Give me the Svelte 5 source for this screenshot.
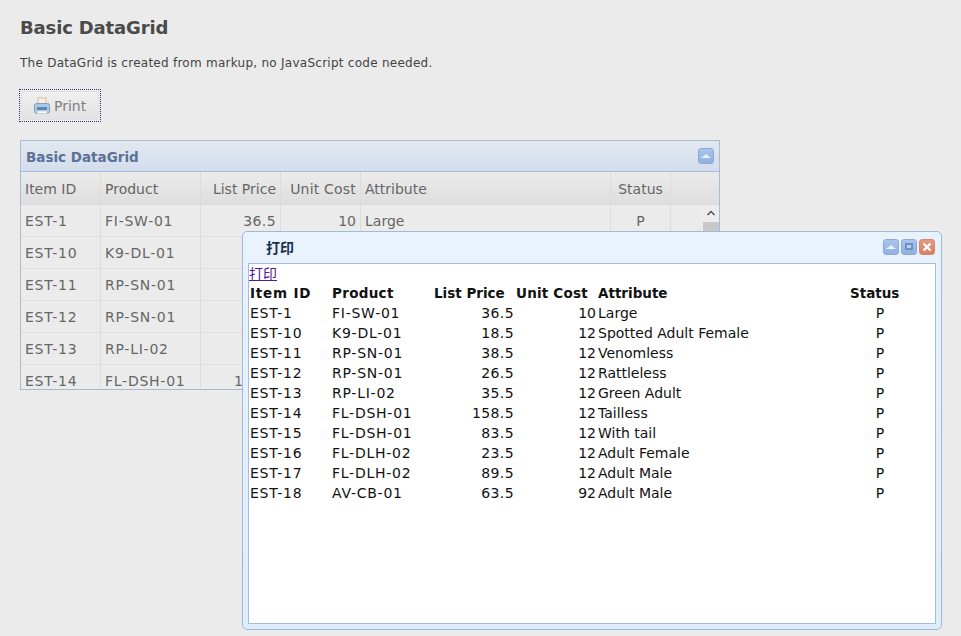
<script>
  const rows = [
    ['EST-1','FI-SW-01','36.5','10','Large','P'],
    ['EST-10','K9-DL-01','18.5','12','Spotted Adult Female','P'],
    ['EST-11','RP-SN-01','38.5','12','Venomless','P'],
    ['EST-12','RP-SN-01','26.5','12','Rattleless','P'],
    ['EST-13','RP-LI-02','35.5','12','Green Adult','P'],
    ['EST-14','FL-DSH-01','158.5','12','Tailless','P'],
    ['EST-15','FL-DSH-01','83.5','12','With tail','P'],
    ['EST-16','FL-DLH-02','23.5','12','Adult Female','P'],
    ['EST-17','FL-DLH-02','89.5','12','Adult Male','P'],
    ['EST-18','AV-CB-01','63.5','92','Adult Male','P']
  ];
  const visible = rows.slice(0, 6);
  const heads = ['Item ID','Product','List Price','Unit Cost','Attribute','Status'];
</script>

<div class="page">
  <h2>Basic DataGrid</h2>
  <p>The DataGrid is created from markup, no JavaScript code needed.</p>
  <div class="focus">
    <button class="print">
      <svg width="18" height="18" viewBox="0 0 18 18">
        <rect x="5" y="1" width="8" height="6" fill="#fbeee0" stroke="#d9b9a0"/>
        <path d="M1.500 8.500q0-2 2-2h11q2 0 2 2v6q0 1.500-1.500 1.500h-12q-1.500 0-1.500-1.500z" fill="#a9c8e6" stroke="#7f9fc0"/>
        <rect x="4" y="10" width="10" height="3" fill="#5c86b4"/>
        <rect x="4" y="14" width="10" height="2.500" fill="#f4f6f8" stroke="#b9c6d4" stroke-width=".5"/>
      </svg>
      <span>Print</span>
    </button>
  </div>

  <section class="panel">
    <header class="panel-title">
      <span>Basic DataGrid</span>
      <i class="tool"><b class="tri"></b></i>
    </header>
    <div class="grid-head">
      <span class="c1">Item ID</span><span class="c2">Product</span><span class="c3 r">List Price</span><span class="c4 r wide">Unit Cost</span><span class="c5">Attribute</span><span class="c6 m">Status</span><span class="c7"></span>
    </div>
    <div class="grid-body">
      {#each visible as row}
        <div class="grid-row">
          <span class="c1 code">{row[0]}</span><span class="c2 code">{row[1]}</span><span class="c3 r num">{row[2]}</span><span class="c4 r">{row[3]}</span><span class="c5">{row[4]}</span><span class="c6 m">{row[5]}</span><span class="c7"></span>
        </div>
      {/each}
      <div class="scrollbar">
        <svg width="10" height="8" viewBox="0 0 10 8"><path d="M1.500 6L5 2.500 8.500 6" fill="none" stroke="#555" stroke-width="1.500"/></svg>
        <div class="thumb"></div>
      </div>
    </div>
  </section>
</div>

<div class="window">
  <header class="win-title">
    <span>打印</span>
    <div class="tools">
      <i class="tool"><b class="tri"></b></i>
      <i class="tool"><b class="square"></b></i>
      <i class="tool close">
        <svg width="10" height="10" viewBox="0 0 10 10"><path d="M1.500 1.500l7 7M8.500 1.500l-7 7" stroke="#fff" stroke-width="2.400"/></svg>
      </i>
    </div>
  </header>
  <div class="win-body">
    <a href="#print" class="link">打印</a>
    <table>
      <thead>
        <tr>{#each heads as h}<th>{h}</th>{/each}</tr>
      </thead>
      <tbody>
        {#each rows as row}
          <tr>
            <td class="code">{row[0]}</td><td class="code">{row[1]}</td><td class="tr num">{row[2]}</td><td class="tr">{row[3]}</td><td>{row[4]}</td><td class="tc">{row[5]}</td>
          </tr>
        {/each}
      </tbody>
    </table>
  </div>
</div>

<style>
  :global(body) {
    margin: 0;
    background: #ebebeb;
    font-family: "DejaVu Sans", Verdana, "Noto Sans CJK SC", sans-serif;
    overflow: hidden;
  }
  .page { padding: 16px 20px 0; height: 620px; box-sizing: border-box; color: #444; }
  h2 { margin: 0; font-size: 18px; line-height: 24px; font-weight: 700; color: #4a4a4a; letter-spacing: -.15px; }
  p { margin: 14px 0 0; font-size: 12px; line-height: 18px; color: #444; letter-spacing: .26px; }
  .focus {
    width: 82px; height: 33px; box-sizing: border-box;
    margin: 17px 0 0 -1px; padding: 1px;
    border: 1px dotted #33337a;
  }
  .print {
    display: flex; align-items: center; gap: 3px;
    padding: 0 0 0 11px;
    width: 78px; height: 29px; box-sizing: border-box;
    border: 1px solid #e0e0e0; border-radius: 4px;
    background: linear-gradient(#f0f0f0, #e2e2e2);
    color: #808080; font: 14px "DejaVu Sans", sans-serif;
  }
  .panel {
    width: 700px; height: 250px; box-sizing: border-box; margin-top: 18px;
    border: 1px solid; overflow: hidden; color: #555;
    border-color: #a4bdd8 #a4bdd8 #aab8c8;
  }
  .panel-title {
    height: 31px; box-sizing: border-box; display: flex; align-items: center; justify-content: space-between;
    padding: 1px 5px 0 5px; border-bottom: 1px solid #a4bdd8;
    background: linear-gradient(#e3e8ee, #d3dded);
    color: #5b7296; font-size: 13.500px; font-weight: 700;
  }
  .panel-title .tool { margin-top: -1px; }
  .tool {
    width: 16px; height: 16px; border-radius: 3px; box-sizing: border-box;
    background: linear-gradient(#a9c5ee, #8fb0e2); border: 1px solid #8fa9d4;
    display: flex; align-items: center; justify-content: center;
  }
  .tri { width: 0; height: 0; border: 5px solid transparent; border-top: 0; border-bottom: 4px solid #e9f1fb; }
  .square { width: 8px; height: 7px; box-sizing: border-box; border: 2px solid #6f8fc0; background: #bcd2ee; }
  .close { background: linear-gradient(#e69a80, #d77f62); border-color: #cf8a70; }
  .grid-head, .grid-row { display: flex; font-size: 14px; color: #666; }
  .grid-head {
    height: 33px; background: linear-gradient(#ebebeb, #dedede); border-bottom: 1px solid #dcdcdc; box-sizing: border-box;
  }
  .grid-head span, .grid-row span {
    box-sizing: border-box; padding: 0 4px; border-right: 1px solid #dcdcdc; display: block; white-space: nowrap; overflow: hidden;
  }
  .grid-head span { line-height: 34px; }
  .grid-row { height: 32px; border-bottom: 1px solid #dfdfdf; box-sizing: border-box; }
  .grid-row span { line-height: 33px; }
  .grid-head .c7, .grid-row .c7 { border-right: 0; }
  .c1 { width: 80px; }
  .c2 { width: 100px; }
  .c3 { width: 80px; }
  .c4 { width: 80px; }
  .c5 { width: 250px; }
  .c6 { width: 60px; }
  .c7 { flex: 1; }
  .r { text-align: right; }
  .m { text-align: center; }
  .wide { letter-spacing: .2px; }
  .code { letter-spacing: .75px; }
  .num { letter-spacing: .4px; }
  .grid-body { position: relative; }
  .scrollbar { position: absolute; top: 0; right: 0; width: 17px; height: 186px; background: #ececec; display: flex; flex-direction: column; align-items: center; padding-top: 4px; box-sizing: border-box; }
  .thumb { width: 16px; height: 30px; background: #c8c8c8; margin-top: 5px; }

  .window {
    position: absolute; left: 242px; top: 231px; width: 700px; height: 399px; box-sizing: border-box;
    border: 1px solid #9fbbdc; border-radius: 5px;
    background: linear-gradient(#e8f3fd, #dfecfa);
    padding: 0 5px 5px; display: flex; flex-direction: column;
  }
  .win-title { height: 31px; flex: none; display: flex; align-items: center; justify-content: space-between; padding: 0 1px 2px 18px; color: #1a3050; font-size: 14px; font-weight: 700; box-sizing: border-box; }
  .tools { display: flex; gap: 2px; }
  .win-body { flex: 1; background: #fff; border: 1px solid #a4bdd8; color: #111; font-size: 14px; line-height: 18px; }
  .link { display: block; color: #551a8b; text-decoration: underline; height: 18px; width: fit-content; margin-top: 1px; }
  table { border-collapse: separate; border-spacing: 2px; table-layout: fixed; width: 664px; margin: -1px 0 0 -1px; font-size: 14px; }
  th, td { padding: 0; height: 18px; white-space: nowrap; }
  th { text-align: left; font-weight: 700; font-size: 13.500px; }
  th:nth-child(1) { width: 80px; letter-spacing: .8px; }
  th:nth-child(2) { width: 100px; letter-spacing: .3px; }
  th:nth-child(3) { width: 80px; }
  th:nth-child(4) { width: 80px; letter-spacing: .2px; }
  th:nth-child(5) { width: 250px; }
  th:nth-child(6) { width: 60px; }
  .tr { text-align: right; }
  .tc { text-align: center; }
</style>
